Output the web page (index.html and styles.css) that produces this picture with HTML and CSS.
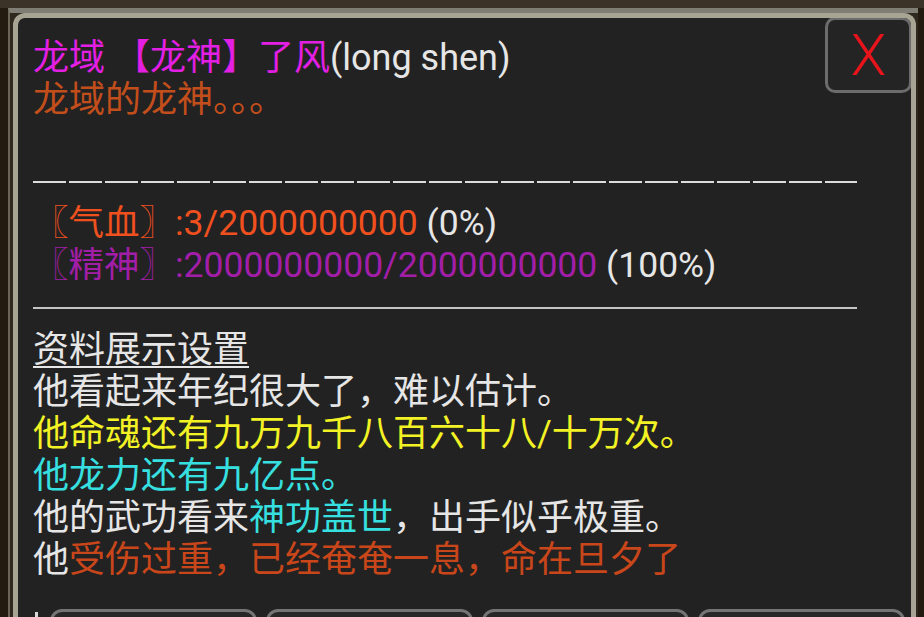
FILE: index.html
```html
<!DOCTYPE html>
<html lang="zh">
<head>
<meta charset="utf-8">
<title>龙域 【龙神】了风</title>
<link rel="stylesheet" href="styles.css">
</head>
<body>
<div class="screen">
  <div class="topband"></div>
  <div class="window">
    <div class="panel">
      <div class="header">
        <div class="title-block">
          <div class="line"><span class="magenta">龙域 【龙神】了风</span><span class="white">(long shen)</span></div>
          <div class="line brown">龙域的龙神。。。</div>
        </div>
        <div class="close">X</div>
      </div>
      <div class="dashed"></div>
      <div class="stats">
        <div class="line"><span class="hp">〖气血〗:3/2000000000</span> <span class="white">(0%)</span></div>
        <div class="line"><span class="sp">〖精神〗:2000000000/2000000000</span> <span class="white">(100%)</span></div>
      </div>
      <div class="solid"></div>
      <div class="desc">
        <div class="line white"><span class="under">资料展示设置</span></div>
        <div class="line white">他看起来年纪很大了，难以估计。</div>
        <div class="line yellow">他命魂还有九万九千八百六十八/十万次。</div>
        <div class="line cyan">他龙力还有九亿点。</div>
        <div class="line white">他的武功看来<span class="cyan">神功盖世</span>，出手似乎极重。</div>
        <div class="line white">他<span class="red">受伤过重，已经奄奄一息，命在旦夕了</span></div>
      </div>
      <div class="buttons">
        <div class="tick"></div>
        <div class="btn"></div>
        <div class="btn"></div>
        <div class="btn"></div>
        <div class="btn"></div>
      </div>
    </div>
  </div>
</div>
</body>
</html>
```
FILE: styles.css
```css
html, body {
  margin: 0;
  padding: 0;
  width: 924px;
  height: 617px;
  overflow: hidden;
  background: #241b10;
}
.screen {
  display: flex;
  flex-direction: column;
  height: 617px;
}
.topband {
  height: 8px;
  background: #3b3327;
  flex: none;
}
.window {
  flex: 1;
  margin-left: 8px;
  margin-right: 6px;
  border-top: 5px solid #807e74;
  border-left: 2px solid #6b6558;
  background: #2e281e;
  display: flex;
  min-height: 0;
}
.panel {
  flex: 1;
  margin-left: 3px;
  margin-right: 2px;
  border: 5px solid #a8a493;
  border-bottom: none;
  border-radius: 12px 12px 0 0;
  background: #222222;
  padding: 0 0 0 15px;
  font-family: "Roboto", "Noto Sans CJK SC", sans-serif;
  font-size: 36px;
  line-height: 42px;
  color: #e6e6e6;
  overflow: hidden;
}
.header {
  display: flex;
  justify-content: space-between;
  align-items: flex-start;
}
.title-block {
  padding-top: 19px;
}
.line {
  height: 42px;
  white-space: nowrap;
}
.close {
  margin-top: -1px;
  margin-right: -1px;
  width: 81px;
  height: 70px;
  border: 3px solid #6c6c6c;
  border-radius: 10px;
  background: #242424;
  color: #e8141c;
  font-family: "Roboto", sans-serif;
  font-weight: 300;
  font-size: 58px;
  line-height: 70px;
  text-align: center;
}
.dashed {
  margin-top: 60px;
  width: 824px;
  height: 2px;
  background: repeating-linear-gradient(to right, #dcdcdc 0 33px, transparent 33px 36px);
}
.stats {
  margin-top: 19px;
  font-size: 35.5px;
}
.solid {
  margin-top: 21px;
  width: 824px;
  height: 2px;
  background: #c4c4c4;
}
.desc {
  margin-top: 20px;
}
.under {
  text-decoration: underline;
  text-decoration-thickness: 2px;
  text-underline-offset: 4px;
}
.buttons {
  margin-top: 28px;
  display: flex;
  align-items: flex-start;
}
.tick {
  margin-left: 2px;
  margin-top: 3px;
  width: 3px;
  height: 20px;
  background: #d8d8d8;
  margin-right: 12px;
  flex: none;
}
.btn {
  width: 201px;
  height: 40px;
  border: 3px solid #747474;
  border-radius: 12px;
  background: #272727;
  margin-right: 9px;
  flex: none;
}
.magenta { color: #e21fe2; }
.white { color: #e6e6e6; }
.brown { color: #c24e1c; }
.hp { color: #f0501e; }
.sp { color: #a31ea8; }
.yellow { color: #f2f224; }
.cyan { color: #36e0e0; }
.red { color: #c8461a; }
```
